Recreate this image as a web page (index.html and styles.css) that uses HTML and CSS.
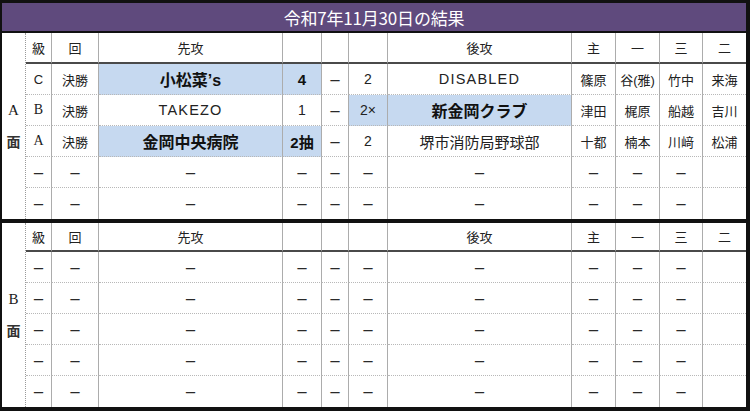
FILE: index.html
```html
<!DOCTYPE html>
<html lang="ja">
<head>
<meta charset="utf-8">
<title>令和7年11月30日の結果</title>
<link rel="stylesheet" href="styles.css">
</head>
<body>
<div class="board">
  <div class="title">令和7年11月30日の結果</div>

  <div class="section sec-a">
    <div class="lab"><span class="lab-l">A</span><span class="lab-k">面</span></div>
    <div class="c h">級</div><div class="c h">回</div><div class="c h">先攻</div><div class="c h"></div><div class="c h"></div><div class="c h"></div><div class="c h">後攻</div><div class="c h">主</div><div class="c h">一</div><div class="c h">三</div><div class="c h end">二</div>

    <div class="c">C</div><div class="c">決勝</div><div class="c hl team">小松菜’s</div><div class="c hl score b">4</div><div class="c dash">－</div><div class="c score">2</div><div class="c latin">DISABLED</div><div class="c">篠原</div><div class="c">谷(雅)</div><div class="c">竹中</div><div class="c end">来海</div>

    <div class="c serif">B</div><div class="c">決勝</div><div class="c latin">TAKEZO</div><div class="c score">1</div><div class="c dash">－</div><div class="c hl score">2×</div><div class="c hl team">新金岡クラブ</div><div class="c">津田</div><div class="c">梶原</div><div class="c">船越</div><div class="c end">吉川</div>

    <div class="c serif">A</div><div class="c">決勝</div><div class="c hl team">金岡中央病院</div><div class="c hl score b">2抽</div><div class="c dash">－</div><div class="c score">2</div><div class="c team2">堺市消防局野球部</div><div class="c">十都</div><div class="c">楠本</div><div class="c">川﨑</div><div class="c end">松浦</div>

    <div class="c dash">－</div><div class="c dash">－</div><div class="c dash">－</div><div class="c dash">－</div><div class="c dash">－</div><div class="c dash">－</div><div class="c dash">－</div><div class="c dash">－</div><div class="c dash">－</div><div class="c dash">－</div><div class="c end"></div>

    <div class="c dash lr">－</div><div class="c dash lr">－</div><div class="c dash lr">－</div><div class="c dash lr">－</div><div class="c dash lr">－</div><div class="c dash lr">－</div><div class="c dash lr">－</div><div class="c dash lr">－</div><div class="c dash lr">－</div><div class="c dash lr">－</div><div class="c end lr"></div>
  </div>

  <div class="section sec-b">
    <div class="lab"><span class="lab-l">B</span><span class="lab-k">面</span></div>
    <div class="c h">級</div><div class="c h">回</div><div class="c h">先攻</div><div class="c h"></div><div class="c h"></div><div class="c h"></div><div class="c h">後攻</div><div class="c h">主</div><div class="c h">一</div><div class="c h">三</div><div class="c h end">二</div>

    <div class="c dash">－</div><div class="c dash">－</div><div class="c dash">－</div><div class="c dash">－</div><div class="c dash">－</div><div class="c dash">－</div><div class="c dash">－</div><div class="c dash">－</div><div class="c dash">－</div><div class="c dash">－</div><div class="c end"></div>

    <div class="c dash">－</div><div class="c dash">－</div><div class="c dash">－</div><div class="c dash">－</div><div class="c dash">－</div><div class="c dash">－</div><div class="c dash">－</div><div class="c dash">－</div><div class="c dash">－</div><div class="c dash">－</div><div class="c end"></div>

    <div class="c dash">－</div><div class="c dash">－</div><div class="c dash">－</div><div class="c dash">－</div><div class="c dash">－</div><div class="c dash">－</div><div class="c dash">－</div><div class="c dash">－</div><div class="c dash">－</div><div class="c dash">－</div><div class="c end"></div>

    <div class="c dash">－</div><div class="c dash">－</div><div class="c dash">－</div><div class="c dash">－</div><div class="c dash">－</div><div class="c dash">－</div><div class="c dash">－</div><div class="c dash">－</div><div class="c dash">－</div><div class="c dash">－</div><div class="c end"></div>

    <div class="c dash lr">－</div><div class="c dash lr">－</div><div class="c dash lr">－</div><div class="c dash lr">－</div><div class="c dash lr">－</div><div class="c dash lr">－</div><div class="c dash lr">－</div><div class="c dash lr">－</div><div class="c dash lr">－</div><div class="c dash lr">－</div><div class="c end lr"></div>
  </div>
</div>
</body>
</html>
```

FILE: styles.css
```css
html, body {
  margin: 0;
  padding: 0;
  background: #ffffff;
}

.board {
  width: 750px;
  height: 411px;
  box-sizing: border-box;
  border-style: solid;
  border-color: #111111;
  border-width: 3px 4px 4px 2px;
  background: #ffffff;
  font-family: "Liberation Sans", "Noto Sans CJK JP", sans-serif;
  color: #222222;
  overflow: hidden;
}

.title {
  height: 28px;
  background: #5f4a7d;
  color: #ffffff;
  font-family: "Noto Sans CJK JP", sans-serif;
  font-size: 17px;
  display: flex;
  align-items: center;
  justify-content: center;
  border-bottom: 2px solid #111111;
  letter-spacing: -0.2px;
}

.section {
  display: grid;
  grid-template-columns: 24px 26px 47px 184px 39px 27px 39px 184px 44px 44px 43px 43px;
}

.sec-a {
  grid-template-rows: 31px repeat(5, 31px);
  border-bottom: 4px solid #111111;
}

.sec-b {
  grid-template-rows: 29px repeat(5, 31px);
}

.lab {
  grid-row: 1 / span 6;
  grid-column: 1;
  display: flex;
  flex-direction: column;
  align-items: center;
  justify-content: center;
  border-right: 1px dotted #9a9a9a;
  box-sizing: border-box;
  font-size: 14px;
  line-height: 31px;
  color: #1a1a1a;
}

.lab-l {
  font-family: "Liberation Serif", serif;
  font-size: 15px;
}

.lab-k {
  font-family: "Noto Sans CJK JP", sans-serif;
  font-size: 14px;
  font-weight: bold;
  color: #333333;
}

.c {
  display: flex;
  align-items: center;
  justify-content: center;
  box-sizing: border-box;
  border-right: 1px solid #acacac;
  border-bottom: 1px dotted #b8b8b8;
  font-size: 13px;
  white-space: nowrap;
  min-width: 0;
}

.c.h {
  border-bottom: 2px solid #4a4a4a;
}

.c.end {
  border-right: none;
}

.c.lr {
  border-bottom: none;
}

.hl {
  background: #c6d9f0;
}

.team {
  font-size: 16px;
  font-weight: bold;
  color: #111111;
}

.team2 {
  font-size: 15px;
}

.latin {
  font-size: 14.5px;
  letter-spacing: 1.2px;
}

.serif {
  font-family: "Liberation Serif", serif;
  font-size: 14px;
}

.score {
  font-size: 14px;
}

.score.b {
  font-size: 15px;
  font-weight: bold;
  color: #111111;
}

.dash {
  font-family: "Noto Sans CJK JP", sans-serif;
  font-size: 13px;
  font-weight: bold;
  color: #2a2a2a;
}
```
